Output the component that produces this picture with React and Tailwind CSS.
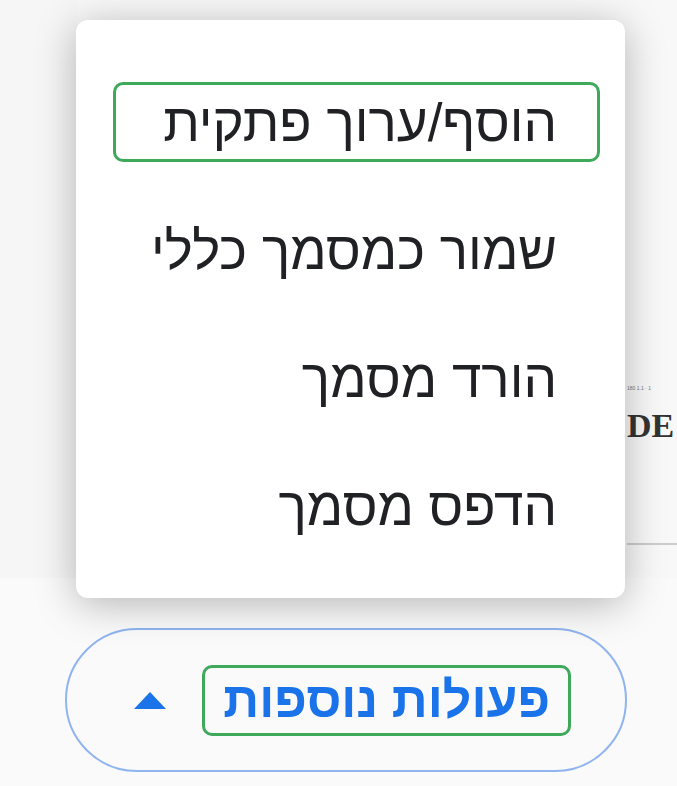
import React from 'react';

const items = ['הוסף/ערוך פתקית', 'שמור כמסמך כללי', 'הורד מסמך', 'הדפס מסמך'];

export default function App() {
  return (
    <div
      className="relative w-[677px] h-[786px] overflow-hidden bg-white"
      style={{ fontFamily: '"Liberation Sans", Arial, sans-serif' }}
    >
      {/* document area */}
      <div className="h-[578px] bg-[#f6f6f6] flex justify-end overflow-hidden">
        <div className="w-[600px] bg-[#f8f8f8] flex flex-col pt-[386px] shrink-0 pl-[550px]">
          <div className="text-[5px] text-[#777] leading-none whitespace-nowrap">180 1.1 · 1</div>
          <div
            className="mt-[18px] text-[34px] font-bold text-[#333] leading-none whitespace-nowrap"
            style={{ fontFamily: '"Liberation Serif", serif' }}
          >
            DE
          </div>
          <div className="mt-[100px] w-[50px] h-[2px] bg-[#ccc]" />
        </div>
      </div>

      {/* bottom bar */}
      <div className="h-[208px] bg-[#fafafa] pt-[50px] pl-[65px]">
        <button
          dir="rtl"
          className="w-[562px] h-[144px] rounded-full border-2 border-[#8fb4ef] flex items-center pr-[54px] gap-[36px]"
        >
          <span className="h-[71px] px-[18px] rounded-[10px] border-[3px] border-[#3ea85b] flex items-center text-[50px] font-bold text-[#1a73e8] leading-none">
            פעולות נוספות
          </span>
          <svg width="32" height="17" viewBox="0 0 32 17">
            <path d="M16 0 L32 17 L0 17 Z" fill="#1a73e8" />
          </svg>
        </button>
      </div>

      {/* menu */}
      <div
        dir="rtl"
        className="absolute left-[76px] top-[20px] w-[549px] h-[578px] rounded-xl bg-white shadow-[0_6px_40px_rgba(0,0,0,0.28)] flex flex-col pt-[62px] gap-[48px]"
      >
        {items.map((t, i) => (
          <div
            key={t}
            className={
              i === 0
                ? 'mr-[25px] w-[487px] h-[80px] rounded-[10px] border-[3px] border-[#3ea85b] flex items-center pr-[40px]'
                : 'mr-[25px] w-[487px] h-[80px] rounded-[10px] border-[3px] border-transparent flex items-center pr-[40px]'
            }
          >
            <span className="text-[53px] text-[#202124] leading-none whitespace-nowrap">{t}</span>
          </div>
        ))}
      </div>
    </div>
  );
}
